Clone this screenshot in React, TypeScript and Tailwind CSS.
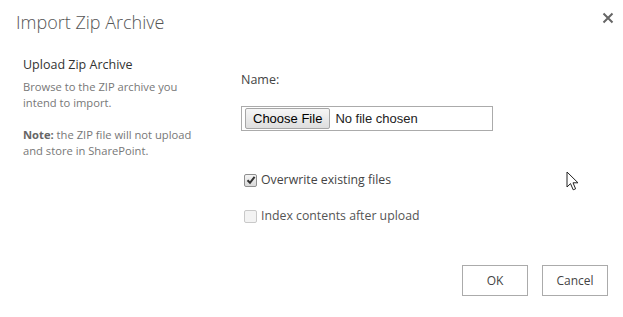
import React from 'react';

const ui = { fontFamily: '"Segoe UI", "Open Sans", "Noto Sans", sans-serif' };
const arial = { fontFamily: '"Liberation Sans", Arial, sans-serif' };

function CloseIcon() {
  return (
    <svg width="12" height="12" viewBox="0 0 12 12">
      <path d="M1.5 1.5 L10.5 10.5 M10.5 1.5 L1.5 10.5" stroke="#666" strokeWidth="2" />
    </svg>
  );
}

function FakeCheckbox({ checked, disabled }: { checked?: boolean; disabled?: boolean }) {
  return (
    <span
      className={`inline-flex h-[13px] w-[13px] items-center justify-center rounded-[2px] border ${
        disabled ? 'border-[#c9c9c9] bg-[#f3f3f3]' : 'border-[#8f8f8f] bg-gradient-to-b from-[#f4f4f4] to-[#d9d9d9]'
      }`}
    >
      {checked && (
        <svg width="10" height="10" viewBox="0 0 10 10">
          <path d="M1.5 5.2 L4 7.8 L8.6 1.8" stroke="#333" strokeWidth="2" fill="none" />
        </svg>
      )}
    </span>
  );
}

export default function App() {
  return (
    <div className="relative h-[317px] w-[623px] overflow-hidden bg-white" style={ui}>
      {/* header */}
      <div className="flex h-[44px] items-start justify-between pl-[16px] pr-[8px] pt-[8px]">
        <h1 className="text-[18px] font-light leading-[28px] text-[#555]">Import Zip Archive</h1>
        <button className="mt-[3px] p-[1px]">
          <CloseIcon />
        </button>
      </div>

      {/* body */}
      <div className="flex">
        <div className="w-[241px] pl-[23px]">
          <h2 className="mt-[12px] text-[12.5px] leading-[18px] text-[#333]">Upload Zip Archive</h2>
          <p className="mt-[5px] whitespace-nowrap text-[11.2px] leading-[16px] text-[#777]">
            Browse to the ZIP archive you
            <br />
            intend to import.
          </p>
          <p className="mt-[16px] whitespace-nowrap text-[11.2px] leading-[16px] text-[#777]">
            <b className="text-[#666]">Note:</b> the ZIP file will not upload
            <br />
            and store in SharePoint.
          </p>
        </div>

        <div className="flex-1">
          <div className="mt-[27px] text-[12.5px] leading-[18px] text-[#444]">Name:</div>
          <div className="mt-[17px] flex h-[25px] w-[252px] items-center border border-[#ababab] pl-[3px]">
            <span
              className="flex h-[21px] items-center rounded-[2px] border border-[#a6a6a6] bg-gradient-to-b from-[#f6f6f6] to-[#dedede] px-[7px] text-[13px] text-black"
              style={arial}
            >
              Choose File
            </span>
            <span className="ml-[5px] text-[13px] text-[#222]" style={arial}>
              No file chosen
            </span>
          </div>

          <label className="ml-[3px] mt-[39px] flex h-[20px] items-center gap-[4px]">
            <FakeCheckbox checked />
            <span className="text-[12.3px] text-[#444]">Overwrite existing files</span>
          </label>
          <label className="ml-[3px] mt-[16px] flex h-[20px] items-center gap-[4px]">
            <FakeCheckbox disabled />
            <span className="text-[12.3px] text-[#555]">Index contents after upload</span>
          </label>
        </div>
      </div>

      {/* footer */}
      <div className="mt-[39px] flex justify-end gap-[14px] pr-[15px]">
        <button className="h-[31px] w-[66px] border border-[#ababab] bg-white text-[12px] text-[#444]">OK</button>
        <button className="h-[31px] w-[66px] border border-[#ababab] bg-white text-[12px] text-[#444]">Cancel</button>
      </div>

      {/* mouse pointer over the dialog */}
      <svg className="pointer-events-none absolute left-[566px] top-[171px]" width="14" height="21" viewBox="0 0 14 21">
        <path
          d="M1 1 L1 16 L4.5 12.6 L7.2 18.8 L9.6 17.8 L7 11.8 L12 11.8 Z"
          fill="white"
          stroke="#222"
          strokeWidth="1"
          strokeLinejoin="round"
        />
      </svg>
    </div>
  );
}
